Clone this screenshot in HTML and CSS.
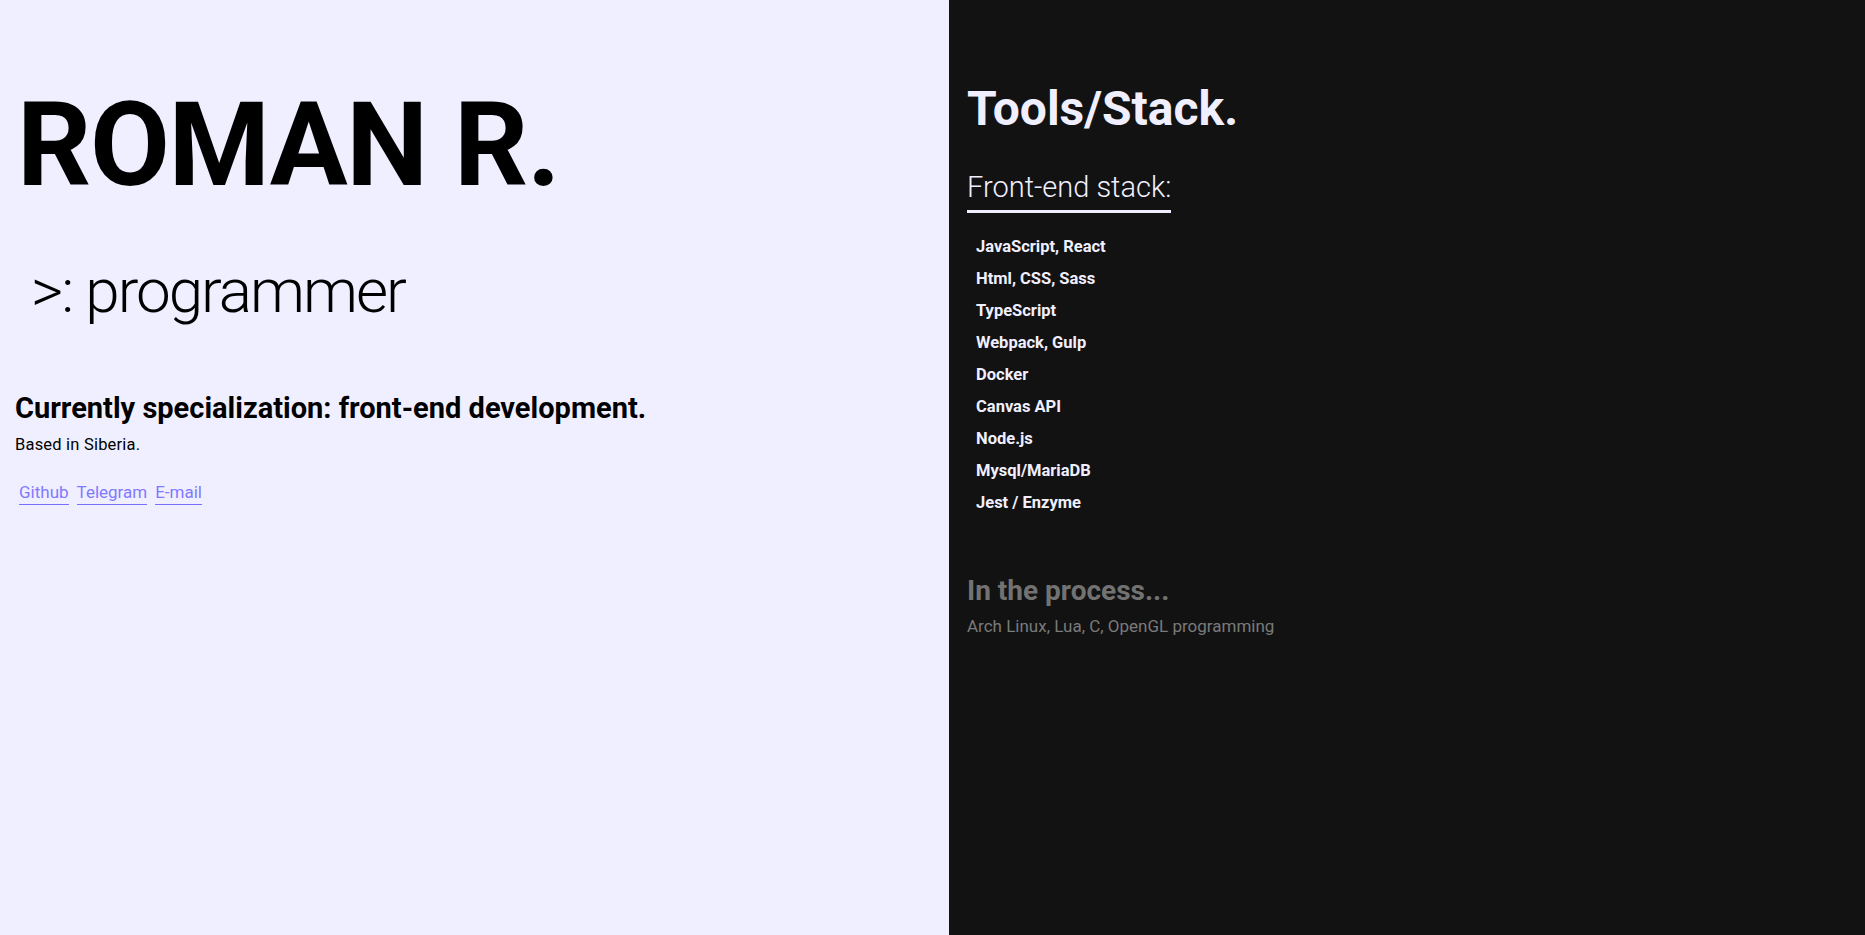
FILE: index.html
```html
<!DOCTYPE html>
<html lang="en">
<head>
<meta charset="utf-8">
<title>Roman R.</title>
<link rel="stylesheet" href="styles.css">
</head>
<body>
<main class="page">
  <section class="intro">
    <h1 class="name">ROMAN R.</h1>
    <p class="role">&gt;: programmer</p>
    <h2 class="spec">Currently specialization: front-end development.</h2>
    <p class="based">Based in Siberia.</p>
    <nav class="links">
      <a class="link" href="#">Github</a>
      <a class="link" href="#">Telegram</a>
      <a class="link" href="#">E-mail</a>
    </nav>
  </section>
  <section class="stack">
    <h2 class="stack-title">Tools/Stack.</h2>
    <h3 class="stack-sub">Front-end stack:</h3>
    <ul class="stack-list">
      <li>JavaScript, React</li>
      <li>Html, CSS, Sass</li>
      <li>TypeScript</li>
      <li>Webpack, Gulp</li>
      <li>Docker</li>
      <li>Canvas API</li>
      <li>Node.js</li>
      <li>Mysql/MariaDB</li>
      <li>Jest / Enzyme</li>
    </ul>
    <h3 class="process-title">In the process...</h3>
    <p class="process-text">Arch Linux, Lua, C, OpenGL programming</p>
  </section>
</main>
</body>
</html>
```
FILE: styles.css
```css
* {
  box-sizing: border-box;
}

html, body {
  margin: 0;
  padding: 0;
}

body {
  font-family: Roboto, "Liberation Sans", sans-serif;
  background: #f0efff;
  color: #000;
}

.page {
  display: grid;
  grid-template-columns: 949px 1fr;
  min-height: 100vh;
}

h1, h2, h3, p, ul, li {
  margin: 0;
  padding: 0;
}

/* ---------- left ---------- */
.intro {
  background: #f0efff;
  padding: 87px 15px 0 15px;
  display: flex;
  flex-direction: column;
  align-items: flex-start;
}

.name {
  margin-left: 2px;
  font-size: 116px;
  font-weight: 700;
  line-height: 1;
  letter-spacing: -1.4px;
}

.role {
  margin: 57px 0 0 16px;
  font-size: 62px;
  font-weight: 300;
  line-height: 1;
  letter-spacing: -2px;
}

.spec {
  margin-top: 72px;
  font-size: 29px;
  font-weight: 700;
  line-height: 1;
}

.based {
  margin-top: 14px;
  font-size: 16.5px;
  font-weight: 400;
  line-height: 1;
  letter-spacing: 0.2px;
}

.links {
  margin-top: 30px;
  display: flex;
}

.link {
  display: inline-block;
  margin: 0 4px;
  padding-bottom: 3px;
  font-size: 17px;
  line-height: 1;
  color: #8179ff;
  text-decoration: none;
  border-bottom: 1px solid #7a70ff;
}

/* ---------- right ---------- */
.stack {
  background: #121212;
  color: #f0efff;
  padding: 85px 18px 0 18px;
  display: flex;
  flex-direction: column;
  align-items: flex-start;
}

.stack-title {
  font-size: 48px;
  font-weight: 700;
  line-height: 1;
}

.stack-sub {
  margin-top: 40px;
  font-size: 29px;
  font-weight: 300;
  line-height: 1;
  padding-bottom: 8px;
  border-bottom: 3px solid #f0efff;
}

.stack-list {
  margin-top: 18px;
  padding-left: 9px;
  list-style: none;
}

.stack-list li {
  font-size: 16.5px;
  font-weight: 700;
  line-height: 32px;
}

.process-title {
  margin-top: 58px;
  font-size: 28px;
  font-weight: 700;
  line-height: 1;
  color: #727272;
}

.process-text {
  margin-top: 13px;
  font-size: 17px;
  line-height: 1;
  color: #7a7a7a;
}
```
